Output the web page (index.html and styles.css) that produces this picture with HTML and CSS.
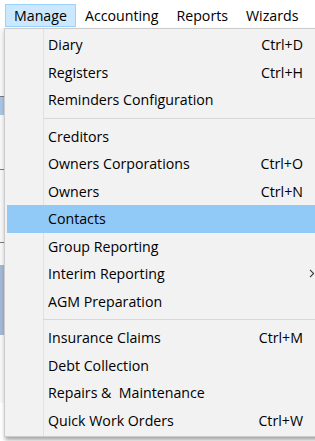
FILE: index.html
```
<!DOCTYPE html>
<html>
<head>
    <title>Manage menu</title>
    <link rel="stylesheet" href="styles.css">
</head>
<body>
    <div class="menubar">
        <span class="top-item open">Manage</span>
        <span class="top-item">Accounting</span>
        <span class="top-item">Reports</span>
        <span class="top-item">Wizards</span>
        <span class="top-item">Help</span>
    </div>

    <!-- the window behind the open menu -->
    <div class="app">
        <div class="band plain"></div>
        <div class="band rule"></div>
        <div class="band selected-row"></div>
        <div class="band plain short"></div>
        <div class="band rule"></div>
        <div class="band plain mid"></div>
        <div class="band rule"></div>
        <div class="band plain thin"></div>
        <div class="band panel"></div>
        <div class="band plain"></div>
    </div>

    <div class="dropdown">
        <div class="item"><span class="label">Diary</span><span class="key">Ctrl+D</span><span class="sub"></span></div>
        <div class="item"><span class="label">Registers</span><span class="key">Ctrl+H</span><span class="sub"></span></div>
        <div class="item"><span class="label">Reminders Configuration</span><span class="key"></span><span class="sub"></span></div>
        <div class="separator"></div>
        <div class="item"><span class="label">Creditors</span><span class="key"></span><span class="sub"></span></div>
        <div class="item"><span class="label">Owners Corporations</span><span class="key">Ctrl+O</span><span class="sub"></span></div>
        <div class="item"><span class="label">Owners</span><span class="key">Ctrl+N</span><span class="sub"></span></div>
        <div class="item hot"><span class="label">Contacts</span><span class="key"></span><span class="sub"></span></div>
        <div class="item"><span class="label">Group Reporting</span><span class="key"></span><span class="sub"></span></div>
        <div class="item"><span class="label">Interim Reporting</span><span class="key"></span><span class="sub"><svg width="6" height="9" viewBox="0 0 6 9"><path d="M1 0.8 L4.6 4.5 L1 8.2" fill="none" stroke="#3a3a3a" stroke-width="1.1"/></svg></span></div>
        <div class="item"><span class="label">AGM Preparation</span><span class="key"></span><span class="sub"></span></div>
        <div class="separator"></div>
        <div class="item"><span class="label">Insurance Claims</span><span class="key">Ctrl+M</span><span class="sub"></span></div>
        <div class="item"><span class="label">Debt Collection</span><span class="key"></span><span class="sub"></span></div>
        <div class="item"><span class="label">Repairs &amp;&nbsp; Maintenance</span><span class="key"></span><span class="sub"></span></div>
        <div class="item"><span class="label">Quick Work Orders</span><span class="key">Ctrl+W</span><span class="sub"></span></div>
    </div>
</body>
</html>
```

FILE: styles.css
```
body {
    margin: 0;
    padding: 0;
    width: 315px;
    height: 441px;
    overflow: hidden;
    position: relative;
    background-color: #ffffff;
    font-family: "Open Sans", "Noto Sans", sans-serif;
    font-size: 14.2px;
    color: #000;
}

.menubar {
    display: flex;
    height: 28px;
    padding: 4px 0 0 5px;
    box-sizing: border-box;
    background-color: #ffffff;
    white-space: nowrap;
}

.top-item {
    height: 23px;
    line-height: 21px;
    padding: 0 8px;
    border: 1px solid transparent;
    box-sizing: border-box;
}

.top-item.open {
    background-color: #cce8ff;
    border-color: #99d1ff;
}

.app {
    display: flex;
    flex-direction: column;
    height: 413px;
}

.band {
    height: 68px;
    flex-shrink: 0;
    background-color: #f7f7f7;
}

.band.short {
    height: 54px;
}

.band.mid {
    height: 72px;
}

.band.thin {
    height: 22px;
}

.band.rule {
    height: 1px;
    background-color: #7a7a7a;
}

.selected-row {
    height: 18px;
    background-color: #a9c4e6;
}

.panel {
    height: 70px;
    background-color: #a3b8d4;
}

.dropdown {
    position: absolute;
    left: 4px;
    top: 28px;
    width: 319px;
    padding: 2px;
    border: 1px solid #cccccc;
    background-color: #f2f2f2;
    background-image: linear-gradient(to right, transparent 38px, #e2e2e2 38px, #e2e2e2 39px, transparent 39px);
    box-shadow: 1px 3px 4px rgba(0, 0, 0, 0.35);
}

.item {
    display: flex;
    align-items: center;
    height: 27.5px;
    padding-left: 41px;
    white-space: nowrap;
}

.item.hot {
    background-color: #91c9f7;
}

.label {
    flex: 1;
}

.key {
    text-align: right;
}

.sub {
    width: 23px;
    display: flex;
    align-items: center;
    padding-left: 6px;
    box-sizing: border-box;
}

.separator {
    height: 9px;
    margin-left: 36px;
    background-image: linear-gradient(#d7d7d7, #d7d7d7);
    background-size: 100% 1px;
    background-position: 0 4px;
    background-repeat: no-repeat;
}
```
